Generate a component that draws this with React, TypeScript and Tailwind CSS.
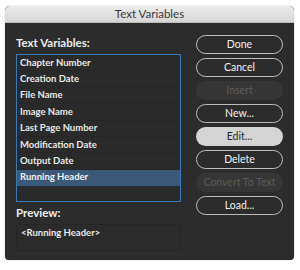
import React from "react";

const items = [
  "Chapter Number",
  "Creation Date",
  "File Name",
  "Image Name",
  "Last Page Number",
  "Modification Date",
  "Output Date",
  "Running Header",
];

type Kind = "normal" | "disabled" | "filled";

function Btn({ label, kind = "normal" }: { label: string; kind?: Kind }) {
  const base =
    "h-[19px] w-[87px] rounded-full flex items-center justify-center text-[10.5px] leading-none";
  if (kind === "disabled")
    return <div className={`${base} bg-[#363636] text-[#5c5c5c]`}>{label}</div>;
  if (kind === "filled")
    return <div className={`${base} bg-[#d4d4d4] text-[#2a2a2a]`}>{label}</div>;
  return (
    <div className={`${base} border border-[#bdbdbd] text-[#f2f2f2]`}>{label}</div>
  );
}

export default function App() {
  return (
    <div
      className="w-[300px] h-[270px] bg-white pt-[6px] pl-[5px]"
      style={{ fontFamily: 'Lato, "Open Sans", sans-serif' }}
    >
      <div className="w-[289px] h-[254px] rounded-t-[5px] rounded-b-[4px] bg-[#2c2c2c] overflow-hidden flex flex-col shadow-[0_0_1px_rgba(0,0,0,0.5)]">
        <div className="h-[17px] bg-gradient-to-b from-[#ececec] to-[#d6d6d6] border-b border-[#bcbcbc] flex items-center justify-center text-[11.5px] text-[#3a3a3a]">
          Text Variables
        </div>
        <div className="flex flex-row pl-[11px] pt-[12px] gap-[15px]">
          <div className="w-[165px] flex flex-col">
            <div className="text-[11.5px] font-bold text-[#ececec] leading-[14px] mt-[1px] mb-[4px]">
              Text Variables:
            </div>
            <div className="h-[148px] border border-[#3d79b8] bg-[#2a2a2a] flex flex-col">
              {items.map((it) => {
                const sel = it === "Running Header";
                return (
                  <div
                    key={it}
                    className={`h-[16.4px] flex items-center pl-[3px] text-[9.5px] font-bold border-b ${
                      sel
                        ? "bg-[#3b5a7a] text-[#f0f0f0] border-[#3b5a7a]"
                        : "text-[#e8e8e8] border-[#262626]"
                    }`}
                  >
                    {it}
                  </div>
                );
              })}
            </div>
            <div className="text-[11.5px] font-bold text-[#ececec] leading-[14px] mt-[4px] mb-[4px]">
              Preview:
            </div>
            <div className="h-[27px] border border-[#262626] bg-[#2b2b2b] pl-[4px] pt-[1px] text-[9.5px] font-bold text-[#e8e8e8]">
              &lt;Running Header&gt;
            </div>
          </div>
          <div className="flex flex-col gap-[4px]">
            <Btn label="Done" />
            <Btn label="Cancel" />
            <Btn label="Insert" kind="disabled" />
            <Btn label="New..." />
            <Btn label="Edit..." kind="filled" />
            <Btn label="Delete" />
            <Btn label="Convert To Text" kind="disabled" />
            <Btn label="Load..." />
          </div>
        </div>
      </div>
    </div>
  );
}
